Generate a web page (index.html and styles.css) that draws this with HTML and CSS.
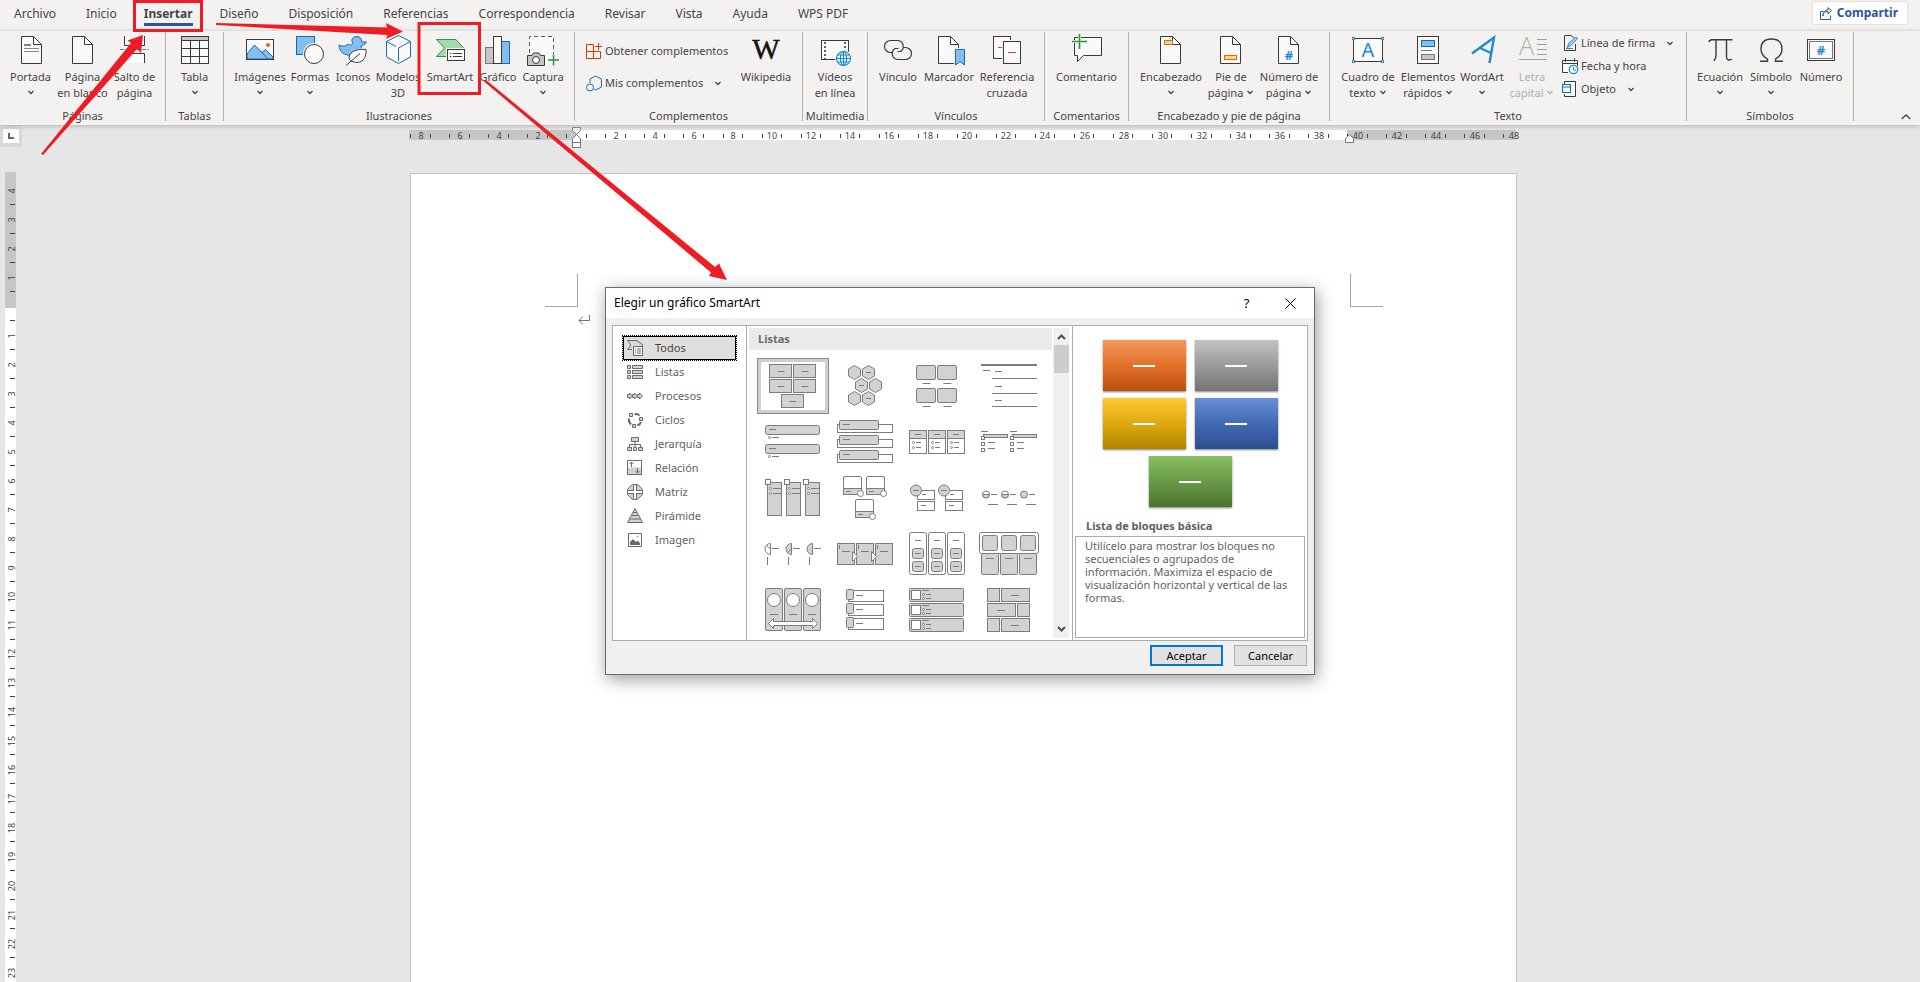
FILE: index.html
```html
<!DOCTYPE html>
<html lang="es">
<head>
<meta charset="utf-8">
<title>Documento - Word</title>
<link rel="stylesheet" href="styles.css">
</head>
<body>
<svg class="defs" aria-hidden="true">
  <symbol id="page" viewBox="0 0 32 32"><path d="M5.5 2.5H17.5L25.5 10.5V29.5H5.5z" fill="#fafafa" stroke="#3b3a39"/><path d="M17.5 2.5V10.5H25.5" fill="none" stroke="#3b3a39"/></symbol>
  <symbol id="chev" viewBox="0 0 8 5"><path d="M1.5 1L4 3.5L6.5 1" fill="none" stroke="currentColor" stroke-width="1.3"/></symbol>
</svg>
<div class="app">
<header class="top">
  <nav class="tabs">
    <button>Archivo</button><button>Inicio</button><button class="active"><span>Insertar</span></button><button>Diseño</button><button>Disposición</button><button>Referencias</button><button>Correspondencia</button><button>Revisar</button><button>Vista</button><button>Ayuda</button><button>WPS PDF</button>
  </nav>
  <button class="share"><svg width="12" height="13" viewBox="0 0 12 13" fill="none" stroke="#2b579a"><path d="M3.5 4.5H.5V12.500H10.500V8.500"/><path d="M3 9C3 5.500 5 4.500 8 4.500V7L11.500 3.500L8 .7V3C5 3 3 5 3 9z"/></svg>Compartir</button>
</header>
<div class="ribbon">
  <section class="group g-pages"><div class="items">
    <button class="big w52"><svg class="ic" viewBox="0 0 32 32"><path d="M6.500 2.500H18.500L26.500 10.500V29.500H6.500z" fill="#fafafa" stroke="#3b3a39"/><path d="M18.500 2.500V10.500H26.500" fill="none" stroke="#3b3a39"/><path d="M9 11H16" stroke="#666" stroke-width="1.600"/><path d="M9 14.500H24M9 17.500H24" stroke="#888"/></svg><span>Portada</span><svg class="cv"><use href="#chev"/></svg></button>
    <button class="big w52"><svg class="ic"><use href="#page"/></svg><span>Página<br>en blanco</span></button>
    <button class="big w52"><svg class="ic" viewBox="0 0 32 32" fill="#fafafa" stroke="#3b3a39"><path d="M5.500 2V11.500H25.500V2M5.500 29V19.500H25.500V29"/><path d="M1 15.500H30" stroke="#2b8fd6" stroke-dasharray="4 1.500"/></svg><span>Salto de<br>página</span></button>
  </div><h2>Páginas</h2></section>
  <section class="group g-tables"><div class="items">
    <button class="big w52"><svg class="ic" viewBox="0 0 32 32" fill="none" stroke="#3b3a39"><rect x="2.500" y="2.500" width="27" height="27" fill="#fafafa"/><rect x="2.500" y="2.500" width="27" height="4" fill="#c8c6c4"/><path d="M11.500 6.500V29.500M20.500 6.500V29.500M2.500 14.500H29.500M2.500 22.500H29.500"/></svg><span>Tabla</span><svg class="cv"><use href="#chev"/></svg></button>
  </div><h2>Tablas</h2></section>
  <section class="group g-illus"><div class="items">
    <button class="big w52"><svg class="ic" viewBox="0 0 32 32"><rect x="2.500" y="5.500" width="27" height="20" fill="#fafafa"/><path d="M3 20L10.500 11L18 18.500L21.500 15.500L29 23V25H3z" fill="#83beec" stroke="#0f6cbd"/><path d="M17 17.500L24 25" stroke="#0f6cbd"/><circle cx="24" cy="11" r="2" fill="#e06c00"/><rect x="2.500" y="5.500" width="27" height="20" fill="none" stroke="#3b3a39"/></svg><span>Imágenes</span><svg class="cv"><use href="#chev"/></svg></button>
    <button class="big w48"><svg class="ic" viewBox="0 0 32 32"><rect x="2.500" y="2.500" width="18" height="18" fill="#83beec" stroke="#0f6cbd"/><circle cx="20" cy="20" r="11" fill="#f3f2f1"/><circle cx="20" cy="20" r="9.500" fill="#fafafa" stroke="#3b3a39"/></svg><span>Formas</span><svg class="cv"><use href="#chev"/></svg></button>
    <button class="big w38"><svg class="ic" viewBox="0 0 32 32"><path d="M2 11C6 13 9 12 11 10C14 12 15 11 15.500 9C13.500 4 17 2.500 20 2.500C23 2.500 24.500 4.500 25 8H29.500C28 11 26 11 24 12C26 18 20 21.500 14 21.500C7 21 2 18 2 11z" fill="#83beec" stroke="#0f6cbd"/><path d="M10 32C9 22 16 13 31 14C31 25 27 32 16 29.500z" fill="#f3f2f1"/><path d="M13 26.500C9.500 20 17 14.500 29 15.500C30 26 23 31.500 13 26.500zM9 31.500L23 19.500" fill="#fafafa" stroke="#3b3a39"/></svg><span>Iconos</span></button>
    <button class="big w52"><svg class="ic" viewBox="0 0 32 32" fill="#fafafa" stroke="#0f6cbd"><path d="M16.500 1.500L28.500 7.500V23L16.500 29.500L4.500 23V7.500z"/><path d="M4.500 7.500L14 12.500M28.500 7.500L16.500 14V27" fill="none"/></svg><span>Modelos<br>3D</span></button>
    <button class="big w52"><svg class="ic" viewBox="0 0 32 32"><path d="M2.500 5.500H22L29.500 14L22 22.500H2.500L10.500 14z" fill="#a2dcae" stroke="#309048"/><rect x="12" y="14" width="20" height="14" fill="#f3f2f1"/><rect x="13.500" y="15.500" width="17" height="11" fill="#fafafa" stroke="#3b3a39"/><path d="M16 19.500H17.500M19 19.500H28M16 22.500H17.500M19 22.500H28" stroke="#3b3a39"/></svg><span>SmartArt</span></button>
    <button class="big w44"><svg class="ic" viewBox="0 0 32 32"><rect x="3.500" y="13.500" width="8" height="16" fill="#c8c6c4" stroke="#797775"/><rect x="19.500" y="7.500" width="8" height="22" fill="#83beec" stroke="#0f6cbd"/><rect x="11.500" y="2.500" width="8" height="27" fill="#fafafa" stroke="#3b3a39"/></svg><span>Gráfico</span></button>
    <button class="big w46"><svg class="ic" viewBox="0 0 32 32" fill="none"><rect x="2.500" y="2.500" width="24" height="26" fill="#fafafa"/><path d="M2.500 19V2.500H26.500V20" stroke="#605e5c" stroke-dasharray="4 3"/><path d="M.5 21.500H5L6.500 19H12L13.500 21.500H17.500V31.500H.5z" fill="#c8c6c4" stroke="#3b3a39"/><circle cx="9" cy="26" r="3.500" fill="#fafafa" stroke="#3b3a39"/><path d="M21 26H32M26.500 20.500V31.500" stroke="#309048" stroke-width="1.500"/></svg><span>Captura</span><svg class="cv"><use href="#chev"/></svg></button>
  </div><h2>Ilustraciones</h2></section>
  <section class="group g-addins"><div class="items">
    <div class="stack two">
      <button class="small"><svg width="17" height="17" viewBox="0 0 17 17" fill="none" stroke="#d83b01"><path d="M.5 8.500V1.500H7.500V16M.5 8.500V15.500H14.500V8.500H.5M12.500 0V7M9 3.500H16"/></svg><span>Obtener complementos</span></button>
      <button class="small"><svg width="17" height="17" viewBox="0 0 17 17" fill="none" stroke="#0f6cbd"><path d="M4 8V4L9.500 1L15.500 4V12L9.500 15L8 14"/><circle cx="4" cy="12.500" r="3.500"/></svg><span>Mis complementos</span><svg class="cv gap"><use href="#chev"/></svg></button>
    </div>
    <button class="big w64"><svg class="ic" viewBox="0 0 32 32"><text x="16" y="25" class="wiki">W</text></svg><span>Wikipedia</span></button>
  </div><h2>Complementos</h2></section>
  <section class="group g-media"><div class="items">
    <button class="big w52"><svg class="ic" viewBox="0 0 32 32" fill="none"><rect x="2.500" y="6.500" width="27" height="19" fill="#fafafa" stroke="#3b3a39"/><path d="M6 8V25M26 8V25" stroke="#3b3a39" stroke-width="1.600" stroke-dasharray="2 2"/><circle cx="24.500" cy="24.500" r="8.500" fill="#f3f2f1"/><g stroke="#1e8bcd" stroke-width="1.200"><circle cx="24.500" cy="24.500" r="7" fill="#fafafa"/><ellipse cx="24.500" cy="24.500" rx="3" ry="7"/><path d="M17.500 24.500H31.500M18.500 21H30.500M18.500 28H30.500M24.500 17.500V31.500"/></g></svg><span>Vídeos<br>en línea</span></button>
  </div><h2>Multimedia</h2></section>
  <section class="group g-links"><div class="items">
    <button class="big w50"><svg class="ic" viewBox="0 0 32 32" fill="none" stroke="#3b3a39" stroke-width="1.200"><path d="M11 18.500H8.500A6 6 0 0 1 8.500 6.500H16A6 6 0 0 1 18.500 17.500H15.500"/><path d="M21.500 13.500H23.500A6 6 0 0 1 23.500 25.500H15.500A6 6 0 0 1 13 14.500H16.500"/></svg><span>Vínculo</span></button>
    <button class="big w52"><svg class="ic" viewBox="0 0 32 32"><use href="#page" width="32" height="32"/><path d="M21 14H32V32H21z" fill="#f3f2f1"/><path d="M22.500 15.500H31.500V31L27 27.500L22.500 31z" fill="#83beec" stroke="#0f6cbd"/></svg><span>Marcador</span></button>
    <button class="big w64"><svg class="ic" viewBox="0 0 32 32" fill="#fafafa" stroke="#3b3a39"><rect x="2.500" y="2.500" width="17" height="22"/><path d="M11 6H31V31H11z" fill="#f3f2f1" stroke="none"/><rect x="12.500" y="7.500" width="17" height="22"/><path d="M7 13.500H11M17 18.500H25" stroke="#e8363b"/></svg><span>Referencia<br>cruzada</span></button>
  </div><h2>Vínculos</h2></section>
  <section class="group g-comments"><div class="items">
    <button class="big w64"><svg class="ic" viewBox="0 0 32 32"><path d="M3.500 3.500H30.500V21.500H12.500L6.500 27.500V21.500H3.500z" fill="#fafafa" stroke="#3b3a39"/><path d="M1 7.500H16M8.500 0V15" stroke="#b8e3c2" stroke-width="3"/><path d="M1 7.500H16M8.500 0V15" stroke="#309048" stroke-width="1.200"/></svg><span>Comentario</span></button>
  </div><h2>Comentarios</h2></section>
  <section class="group g-header"><div class="items">
    <button class="big w68"><svg class="ic" viewBox="0 0 32 32"><use href="#page" width="32" height="32"/><path d="M17.500 6.500H9.500V10.500H17.500" fill="#fcd58c" stroke="#e06c00"/></svg><span>Encabezado</span><svg class="cv"><use href="#chev"/></svg></button>
    <button class="big w52"><svg class="ic" viewBox="0 0 32 32"><use href="#page" width="32" height="32"/><rect x="9.500" y="21.500" width="12" height="4" fill="#fcd58c" stroke="#e06c00"/></svg><span>Pie de<br>página <svg class="cv"><use href="#chev"/></svg></span></button>
    <button class="big w64"><svg class="ic" viewBox="0 0 32 32"><use href="#page" width="32" height="32"/><text x="16" y="26" class="hash">#</text></svg><span>Número de<br>página <svg class="cv"><use href="#chev"/></svg></span></button>
  </div><h2>Encabezado y pie de página</h2></section>
  <section class="group g-text"><div class="items">
    <button class="big w62"><svg class="ic" viewBox="0 0 32 32"><rect x="1.500" y="4.500" width="29" height="23" fill="#fafafa" stroke="#3b3a39"/><g fill="#fff" stroke="#1e8bcd"><rect x=".5" y="3.500" width="2" height="2"/><rect x="29.500" y="3.500" width="2" height="2"/><rect x=".5" y="26.500" width="2" height="2"/><rect x="29.500" y="26.500" width="2" height="2"/></g><text x="16" y="23" class="boxa">A</text></svg><span>Cuadro de<br>texto <svg class="cv"><use href="#chev"/></svg></span></button>
    <button class="big w58"><svg class="ic" viewBox="0 0 32 32"><rect x="5.500" y="2.500" width="21" height="27" fill="#fafafa" stroke="#3b3a39"/><rect x="9.500" y="6.500" width="13" height="6" fill="#83beec" stroke="#0f6cbd"/><path d="M9 16.500H20" stroke="#797775"/><rect x="9.500" y="20.500" width="13" height="5" fill="#c8c6c4" stroke="#797775"/></svg><span>Elementos<br>rápidos <svg class="cv"><use href="#chev"/></svg></span></button>
    <button class="big w50"><svg class="ic" viewBox="0 0 32 32" fill="none" stroke="#1e8bcd" stroke-width="2.400"><path d="M6 19.500L28 3.500L23.500 29M14 14L25 19"/></svg><span>WordArt</span><svg class="cv"><use href="#chev"/></svg></button>
    <button class="big w50" disabled><svg class="ic" viewBox="0 0 32 32" fill="none" stroke="#a19f9d"><text x="10.500" y="21" class="dropa">A</text><path d="M21 5.500H31M21 10.500H31M21 15.500H31M21 20.500H31M3 25.500H31"/></svg><span>Letra<br>capital <svg class="cv"><use href="#chev"/></svg></span></button>
    <div class="stack">
      <button class="small"><svg width="17" height="17" viewBox="0 0 17 17" fill="none"><path d="M2.500 1V15.500H13.500V9M2.500 .5H9L12 3" fill="#fafafa" stroke="#3b3a39"/><path d="M5 12.500L7 8L14 2L15.500 3.500L9 10.500zM4 13.500H11" fill="#a8d3f2" stroke="#1e8bcd"/></svg><span>Línea de firma</span><svg class="cv gap"><use href="#chev"/></svg></button>
      <button class="small"><svg width="17" height="17" viewBox="0 0 17 17" fill="#fafafa" stroke="#3b3a39"><path d="M6 14.500H.5V2.500H15.500V8M.5 5.500H15.500M3.500 0V4M12.500 0V4"/><circle cx="11.500" cy="11.500" r="4.200" stroke="#1e8bcd" stroke-width="1.300"/><path d="M11.500 9V12H14" fill="none" stroke="#1e8bcd"/></svg><span>Fecha y hora</span></button>
      <button class="small"><svg width="17" height="17" viewBox="0 0 17 17" fill="#fafafa" stroke="#3b3a39"><path d="M2.500 3V.5H13.500V15.500H2.500V13"/><rect x=".5" y="3.500" width="8" height="8" stroke="#0f6cbd"/><path d="M.5 6H8.500" stroke="#0f6cbd"/></svg><span>Objeto</span><svg class="cv gap"><use href="#chev"/></svg></button>
    </div>
  </div><h2>Texto</h2></section>
  <section class="group g-symbols"><div class="items">
    <button class="big w50"><svg class="ic" viewBox="0 0 32 32" fill="none" stroke="#3b3a39" stroke-width="1.400"><path d="M5 8C5.500 5.700 6.500 5.700 8 5.700H28.500M12 5.700V20C12 24 11.500 26 9.500 26.500M22.500 5.700V23C22.500 26 25 27 28 25"/></svg><span>Ecuación</span><svg class="cv"><use href="#chev"/></svg></button>
    <button class="big w52"><svg class="ic" viewBox="0 0 32 32" fill="none" stroke="#3b3a39" stroke-width="1.400"><path d="M5 27.300H12.500V25C8 22.500 6 19 6 15C6 8.500 10 5 16.500 5S27 8.500 27 15C27 19 25 22.500 20.500 25V27.300H28"/></svg><span>Símbolo</span><svg class="cv"><use href="#chev"/></svg></button>
    <button class="big w48"><svg class="ic" viewBox="0 0 32 32" fill="#fafafa" stroke="#3b3a39"><rect x="2.500" y="5.500" width="27" height="21"/><rect x="4.500" y="7.500" width="23" height="17" stroke="#797775"/><text x="16" y="21" class="hash">#</text></svg><span>Número</span></button>
  </div><h2>Símbolos</h2></section>
  <button class="collapse" aria-label="Contraer la cinta"><svg width="10" height="6" viewBox="0 0 10 6" fill="none" stroke="#444" stroke-width="1.300"><path d="M.7 5L5 1L9.300 5"/></svg></button>
</div>

<main class="workspace">
  <div class="corner"><button aria-label="Tabulación"><svg width="6" height="6" viewBox="0 0 6 6"><path d="M1 0V5H6" fill="none" stroke="#666" stroke-width="2"/></svg></button></div>
  <div class="hrow"><svg class="hruler" id="hruler"></svg></div>
  <svg class="vruler" id="vruler"></svg>
  <div class="canvas">
    <article class="sheet">
      <div class="marks"><i class="mark left"></i><i class="mark right"></i></div>
      <svg class="pilcrow" width="12" height="10" viewBox="0 0 12 10" fill="none" stroke="#777"><path d="M11.500 0V5.500H1M5 1.500L1 5.500L5 9.500"/></svg>
    </article>
  </div>
</main>
</div>

<section class="dialog" role="dialog" aria-labelledby="dlg-title">
  <header class="dlg-head"><h1 id="dlg-title">Elegir un gráfico SmartArt</h1>
    <button aria-label="Ayuda">?</button>
    <button aria-label="Cerrar"><svg width="11" height="11" viewBox="0 0 11 11" stroke="#000"><path d="M.5 .5L10.500 10.500M10.500 .5L.5 10.500"/></svg></button>
  </header>
  <div class="dlg-body">
    <nav class="cats">
      <button class="sel"><svg class="ci" viewBox="0 0 17 16"><path d="M.5 .5H10L15.500 4.500V7M.5 .5L4 5L.5 9.500H5" /><rect x="6.500" y="6.500" width="9" height="9" fill="#fff"/><path d="M8 9H9M10 9H14M8 11H9M10 11H14M8 13H9M10 13H14"/></svg>Todos</button>
      <button><svg class="ci" viewBox="0 0 17 16"><path d="M.5 1.500H3.500V4.500H.5zM5.500 1.500H15.500V4.500H5.500zM.5 6.500H3.500V9.500H.5zM5.500 6.500H15.500V9.500H5.500zM.5 11.500H3.500V14.500H.5zM5.500 11.500H15.500V14.500H5.500z"/></svg>Listas</button>
      <button><svg class="ci" viewBox="0 0 17 16"><path d="M.5 6.500H2.500V5L5.500 8L2.500 11V9.500H.5zM5.500 6.500H7.500V5L10.500 8L7.500 11V9.500H5.500zM10.500 6.500H12.500V5L15.500 8L12.500 11V9.500H10.500z"/></svg>Procesos</button>
      <button><svg class="ci" viewBox="0 0 17 16"><path d="M2.500 1.500H5.500V4.500H2.500zM12.500 5.500H15.500V8.500H12.500zM5.500 12.500H8.500V15.500H5.500z"/><path d="M7.500 2.500C10 1.500 11 2 12.500 3.500M14 10C13.500 12 12.500 12.500 10.500 13.500M2 6.500C1.500 9 2 10.500 4 12.500" fill="none" stroke-width="2"/></svg>Ciclos</button>
      <button><svg class="ci" viewBox="0 0 17 16"><path d="M4.500 1.500H11.500V5.500H4.500zM.5 11.500H4.500V14.500H.5zM6.500 11.500H9.500V14.500H6.500zM11.500 11.500H15.500V14.500H11.500z"/><path d="M8 5.500V11.500M2.500 11V8.500H13.500V11" fill="none"/></svg>Jerarquía</button>
      <button><svg class="ci" viewBox="0 0 17 16"><path d="M.5 .5H14.500V14.500H.5z" fill="#fff"/><path d="M.5 7.500H14.500V14.500H.5z" fill="#d2d2d2" stroke="none"/><path d="M.5 .5H14.500V14.500H.5zM4.500 7V2M2.500 4L4.500 2L6.500 4M10.500 8V13M8.500 11L10.500 13L12.500 11" fill="none"/></svg>Relación</button>
      <button><svg class="ci" viewBox="0 0 17 16"><path d="M5.500 .5H10.500L13 2.500L15.500 5.500V10.500L13 13L10.500 15.500H5.500L3 13L.5 10.500V5.500L3 2.500z"/><path d="M8 1V15M1 8H15" stroke="#6a6a6a" stroke-width="4"/><path d="M8 1V15M1 8H15" stroke="#fff" stroke-width="2"/></svg>Matriz</button>
      <button><svg class="ci" viewBox="0 0 17 16"><path d="M8 .5L15.500 14.500H.5zM6 4.500H10M4.500 7.500H11.500M2.500 11H13.500"/></svg>Pirámide</button>
      <button><svg class="ci" viewBox="0 0 17 16"><path d="M1.500 1.500H14.500V14.500H1.500z" fill="#fff"/><path d="M3 13V10L6 7L9 10L10.500 8.500L13 11V13z" fill="#6a6a6a" stroke="none"/><circle cx="10.500" cy="4.500" r="1.300" fill="#ccc" stroke="none"/></svg>Imagen</button>
    </nav>
    <div class="gallery">
      <div class="gal-main"><h2>Listas</h2><div class="thumbs" id="thumbs"></div></div>
      <div class="scroll"><svg width="9" height="6" viewBox="0 0 9 6"><path d="M1 5L4.500 1.500L8 5"/></svg><i class="thumb"></i><svg width="9" height="6" viewBox="0 0 9 6"><path d="M1 1L4.500 4.500L8 1"/></svg></div>
    </div>
    <aside class="preview">
      <div class="blocks"><i class="b orange"></i><i class="b gray"></i><i class="b gold"></i><i class="b blue"></i><i class="b green"></i></div>
      <h3>Lista de bloques básica</h3>
      <p>Utilícelo para mostrar los bloques no secuenciales o agrupados de información. Maximiza el espacio de visualización horizontal y vertical de las formas.</p>
    </aside>
  </div>
  <footer class="dlg-foot"><button class="ok">Aceptar</button><button>Cancelar</button></footer>
</section>

<svg class="notes" aria-hidden="true">
  <g fill="none" stroke="#ee1c25" stroke-width="3"><rect x="134.500" y="1.500" width="67" height="29"/><rect x="419" y="23.500" width="60.500" height="70"/></g>
  <g fill="#ee1c25"><path d="M41 154L131 43L127.500 40.500L143 35L141 53L137 49L43 155z"/><path d="M216 23L387 27.500L386 23L403 31.500L386 39L387.500 35L216 25z"/><path d="M486 80L715 267L719 263.500L727 280L709 276L711 272.500L484 81.500z"/></g>
</svg>
<script src="app.js"></script>
</body>
</html>
```
FILE: app.js
```js
// Rulers
const UNIT = 19.52;
function label(x, y, n, extra) {
  return `<text x="${x}" y="${y}" ${extra || ''}>${n}</text>`;
}
function horizontalRuler() {
  const zero = 167;
  let s = '<rect x="-1" y="5" width="1107" height="10" fill="#c6c6c6"/><rect x="167" y="5" width="770" height="10" fill="#fff"/>';
  for (let n = -9; n <= 48; n++) {
    if (n % 2 === 0 && n !== 0) s += label(Math.round(zero + n * UNIT), 14, Math.abs(n));
    if (n < 48) s += `<path d="M${Math.floor(zero + (n + 0.48) * UNIT)}.5 9V13"/>`;
  }
  s += '<g class="knob"><path d="M162.500 2.500H170.500V5.500L162.500 13.500V17.500H170.500V13.500L162.500 5.500z"/><rect x="162.500" y="17.500" width="8" height="5"/><path d="M935.500 17.500V13.500L939.500 9.500L943.500 13.500V17.500z"/></g>';
  document.getElementById('hruler').innerHTML = s;
}
function verticalRuler() {
  const zero = 160, u = 28.95;
  let s = '<rect x="5" y="161" width="11" height="3000" fill="#fff"/><rect x="5" y="25" width="11" height="136" fill="#c6c6c6"/>';
  for (let n = -4; n <= 23; n++) {
    const y = Math.round(zero + n * u);
    if (n) s += label(15, y, Math.abs(n), `transform="rotate(-90 15 ${y})"`);
    s += `<path d="M10 ${Math.floor(zero + (n + 0.47) * u)}.5H15"/>`;
  }
  document.getElementById('vruler').innerHTML = s;
}
horizontalRuler();
verticalRuler();

// SmartArt thumbnails, each on a 72 x 56 grid cell
const G = '#d2d2d2', W = '#fff';
const r = (x1, y1, x2, y2, f = G, rx = 0) => `<rect x="${x1}" y="${y1}" width="${x2 - x1}" height="${y2 - y1}" rx="${rx}" fill="${f}"/>`;
const l = (x1, x2, y) => `<path d="M${x1} ${y}H${x2}"/>`;
const c = (x, y, rad = 1, f = W) => `<circle cx="${x}" cy="${y}" r="${rad}" fill="${f}"/>`;
const p = (d, f = 'none') => `<path d="${d}" fill="${f}"/>`;
const rep = (xs, fn) => xs.map(fn).join('');
const hex = (x, y) => p(`M${x} ${y - 7}L${x + 6} ${y - 3.5}V${y + 3.5}L${x} ${y + 7}L${x - 6} ${y + 3.5}V${y - 3.5}z`, G);
const cols = [0, 19, 38];
const thumbs = [
  rep([[12.5, 6.5], [36.5, 6.5], [12.5, 21.5], [36.5, 21.5], [24.5, 36.5]], ([x, y]) => r(x, y, x + 22, y + 13) + l(x + 8, x + 15, y + 7)),
  rep([[25.5, 14.5], [39.5, 14.5], [32.5, 27.5], [46.5, 27.5], [25.5, 40.5], [39.5, 40.5]], ([x, y]) => hex(x, y)) + l(37, 42, 14.5) + l(30, 35, 27.5) + l(37, 42, 40.5),
  rep([[15.5, 7.5], [36.5, 7.5], [15.5, 30.5], [36.5, 30.5]], ([x, y]) => r(x, y, x + 19, y + 14, G, 1.5) + l(x + 6, x + 14, y + 18)),
  '<path d="M8 7H64" stroke-width="2"/>' + l(10, 17, 12.5) + l(22, 29, 13.5) + l(19, 64, 20.5) + l(22, 29, 28.5) + l(19, 64, 35.5) + l(22, 29, 42.5) + l(19, 64, 48.5),
  rep([0, 19], y => r(8.5, 11.5 + y, 62.5, 20.5 + y, G, 2) + l(12, 19, 15.5 + y) + c(12.5, 23.5 + y) + l(15, 22, 23.5 + y)),
  rep([0, 15, 30], y => r(8.5, 10.5 + y, 63.5, 18.5 + y, W) + r(10.5, 6.5 + y, 49.5, 15.5 + y, G, 1) + l(14, 21, 10.5 + y)),
  rep(cols, x => r(8.5 + x, 16.5, 25.5 + x, 39.5, W) + r(8.5 + x, 16.5, 25.5 + x, 24.5) + l(14 + x, 20 + x, 20.5) + c(12.5 + x, 28.5) + l(15 + x, 20 + x, 28.5) + c(12.5 + x, 33.5) + l(15 + x, 20 + x, 33.5)),
  rep([0, 29], x => l(8 + x, 15 + x, 17.5) + r(10.5 + x, 20.5, 34.5 + x, 23.5) + rep([22.5, 28.5, 34.5], y => r(8.5 + x, y, 11.5 + x, y + 3, W)) + l(15 + x, 22 + x, 28.5) + l(15 + x, 22 + x, 34.5)),
  rep(cols, x => r(10.5 + x, 12.5, 24.5 + x, 45.5) + r(8.5 + x, 9.5, 13.5 + x, 14.5, W) + c(13.5 + x, 18.5) + l(16 + x, 24 + x, 18.5) + c(13.5 + x, 23.5) + l(16 + x, 24 + x, 23.5)),
  rep([[0, 0], [23, 0], [12, 23]], ([x, y]) => r(14.5 + x, 6.5 + y, 32.5 + x, 24.5 + y, W, 1.5) + r(14.5 + x, 18.5 + y, 32.5 + x, 24.5 + y) + l(17 + x, 22 + x, 21.5 + y) + c(31.5 + x, 23.5 + y, 3)),
  rep([0, 28], x => r(16.5 + x, 20.5, 33.5 + x, 29.5, W) + r(16.5 + x, 31.5, 33.5 + x, 40.5, W) + c(15 + x, 20.5, 5.5, G) + l(12 + x, 18 + x, 20.5) + l(21 + x, 25 + x, 24.5) + l(20 + x, 25 + x, 35.5)),
  rep([0, 19, 38], x => c(13 + x, 24.5, 3.5, x === 38 ? G : W) + (x < 38 ? p(`M${9.5 + x} 24.500A3.500 3.500 0 0 0 ${16.5 + x} 24.500z`, G) : '') + l(18 + x, 24 + x, 24.5) + l(15 + x, 25 + x, 34.5)),
  rep([0, 21, 42], x => p(`M${13.5 + x} 17.500A5.500 5.500 0 0 0 ${13.5 + x} 28.500z`, x ? G : W) + (x < 42 ? p(`M${13.5 + x} 23L${9 + x} ${x ? 27 : 19}`) : '') + l(15 + x, 22 + x, 22.5) + p(`M${10.5 + x} 31V39`)),
  rep(cols, x => r(8.5 + x, 17.5, 25.5 + x, 38.5) + l(13 + x, 21 + x, 25.5) + p(`M${10.5 + x} 19V23`)) + rep([0, 19], x => p(`M${23.5 + x} 25.500L${28.5 + x} 30.500L${23.5 + x} 35.500z`, W)),
  rep(cols, x => r(8.5 + x, 6.5, 25.5 + x, 48.5, W, 2) + l(14 + x, 20 + x, 14.5) + rep([22.5, 35.5], y => r(11.5 + x, y, 22.5 + x, y + 10, G, 2) + l(14 + x, 20 + x, y + 5))),
  r(6.5, 6.5, 65.5, 27.5, W, 2) + rep(cols, x => r(9.5 + x, 9.5, 24.5 + x, 24.5, G, 2) + r(8.5 + x, 27.5, 25.5 + x, 48.5, G, 1) + l(13 + x, 21 + x, 32.5)),
  rep(cols, x => r(8.5 + x, 6.5, 25.5 + x, 48.5, G, 1.5) + c(17 + x, 18, 6.5) + l(13 + x, 21 + x, 32.5)) + p('M11.500 41.500L16.500 36.500V39.500H55.500V36.500L60.500 41.500L55.500 46.500V43.500H16.500V46.500z', W),
  rep([0, 14, 28], y => r(19.5, 8.5 + y, 54.5, 19.5 + y, W) + r(17.5, 7.5 + y, 24.5, 17.5 + y, G, 1) + l(27, 34, 13.5 + y)),
  rep([0, 15, 30], y => r(8.5, 6.5 + y, 62.5, 19.5 + y, G, 1) + r(10.5, 8.5 + y, 19.5, 17.5 + y, W) + l(21, 28, 8.5 + y) + c(22.5, 12.5 + y) + l(25, 30, 12.5 + y) + c(22.5, 16.5 + y) + l(25, 30, 16.5 + y)),
  r(14.5, 6.5, 26.5, 19.5) + r(28.5, 6.5, 56.5, 19.5) + l(38, 46, 13.5) + r(14.5, 21.5, 42.5, 34.5) + r(44.5, 21.5, 56.5, 34.5) + l(24, 32, 28.5) + r(14.5, 36.5, 26.5, 49.5) + r(28.5, 36.5, 56.5, 49.5) + l(38, 46, 43.5)
];
document.getElementById('thumbs').innerHTML = thumbs.map((t, i) =>
  `<button class="${i ? '' : 'picked'}" aria-label="Lista ${i + 1}"><svg width="72" height="56" viewBox="0 0 72 56">${t}</svg></button>`).join('');
```
FILE: styles.css
```css
* { box-sizing: border-box; }
body { margin: 0; font: 11px/16px "Noto Sans", "Open Sans", sans-serif; color: #444; background: #e6e6e6; }
button { font: inherit; color: inherit; background: none; border: 0; padding: 0; margin: 0; }
h1, h2, h3, p { margin: 0; font-weight: normal; font-size: 11px; }
.defs { display: none; }
.app { height: 100vh; display: flex; flex-direction: column; overflow: hidden; }

.top { display: flex; justify-content: space-between; align-items: flex-start; height: 31px; background: #f3f2f1; padding-right: 13px; }
.tabs { display: flex; font-size: 12px; }
.tabs button { padding: 5px 15px 0; height: 27px; line-height: 18px; display: flex; align-items: flex-start; white-space: nowrap; }
.tabs button:first-child { padding-left: 14px; }
.tabs .active { font-weight: bold; padding: 5px 12px 0; }
.tabs .active span { border-bottom: 3px solid #2b579a; height: 21px; }
.share { display: flex; align-items: center; gap: 5px; margin-top: 2px; height: 22px; padding: 0 9px 0 7px; background: #fff; box-shadow: 0 0 2px #bbb; border-radius: 2px; color: #2b579a; font-size: 12px; font-weight: bold; }

.ribbon { display: flex; position: relative; flex: none; height: 94px; background: #f3f2f1; box-shadow: 0 1px 5px #b0b0b0; z-index: 1; }
.group { display: flex; flex-direction: column; justify-content: space-between; flex: none; height: 89px; border-right: 1px solid #b3b0ad; margin-top: 1px; background: #f3f2f1; }
.group h2 { text-align: center; line-height: 14px; height: 11px; white-space: nowrap; display: flex; align-items: center; justify-content: center; }
.items { display: flex; justify-content: center; height: 72px; }
.g-pages { width: 166px; } .g-tables { width: 58px; } .g-illus { width: 351px; }
.g-addins { width: 228px; } .g-media { width: 65px; } .g-links { width: 177px; }
.g-comments { width: 84px; } .g-header { width: 201px; } .g-text { width: 357px; } .g-symbols { width: 167px; }
.g-illus .items { justify-content: flex-start; padding-left: 10px; }
.g-text .items { justify-content: flex-start; padding-left: 7px; }
.g-addins .items { justify-content: flex-start; padding-left: 11px; }
.big { display: flex; flex-direction: column; align-items: center; white-space: nowrap; padding-top: 2px; }
.big > span { margin-top: 3px; }
.big:disabled { color: #b1afad; }
.ic { width: 32px; height: 32px; flex: none; overflow: visible; }
.cv { width: 8px; height: 5px; flex: none; }
.big > .cv { margin-top: 5px; }
.big span .cv { vertical-align: 2px; }
.w38 { width: 38px; } .w44 { width: 44px; } .w46 { width: 46px; } .w48 { width: 48px; } .w50 { width: 50px; } .w52 { width: 52px; }
.w58 { width: 58px; } .w62 { width: 62px; } .w64 { width: 64px; } .w68 { width: 68px; }
.stack { display: flex; flex-direction: column; gap: 7px; padding: 3px 0 0 5px; }
.stack.two { gap: 16px; padding: 11px 0 0; width: 148px; }
.small { display: flex; align-items: center; gap: 2px; height: 16px; white-space: nowrap; }
.small .gap { margin-left: 9px; }
text { stroke: none; text-anchor: middle; }
.wiki { font: 29px "Liberation Serif", serif; fill: #111; stroke: #111; stroke-width: .5px; }
.hash { font: bold 13px "Noto Sans", sans-serif; fill: #1e8bcd; }
.boxa { font: 20px "Noto Sans", sans-serif; fill: #1e8bcd; }
.dropa { font: 300 25px "Open Sans", sans-serif; fill: #b1afad; }
.collapse { position: absolute; right: 8px; bottom: 2px; width: 12px; height: 12px; display: flex; align-items: center; justify-content: center; }

.workspace { flex: 1; min-height: 0; display: grid; grid-template: 22px 1fr / 22px 1fr; }
.corner { background: #d9d9d9; padding: 4px 3px; display: flex; }
.corner button { flex: 1; background: #fff; display: flex; align-items: center; justify-content: center; }
.hrow, .canvas { display: flex; justify-content: center; padding-right: 15px; min-height: 0; }
.hruler { width: 1107px; height: 24px; overflow: visible; flex: none; }
.vruler { width: 22px; height: 100%; overflow: hidden; }
.hruler text, .vruler text { font: 9px "Noto Sans", sans-serif; fill: #444; }
.hruler path, .vruler path { stroke: #444; }
.hruler .knob path, .knob rect { fill: #fff; stroke: #777; }
.canvas { padding-top: 26px; overflow: hidden; }
.sheet { width: 1107px; background: #fff; border: 1px solid #c3c3c3; border-bottom: 0; padding-top: 100px; }
.marks { display: flex; justify-content: space-between; padding: 0 133px 0 134px; }
.mark { width: 33px; height: 33px; border-bottom: 1px solid #a6a6a6; }
.mark.left { border-right: 1px solid #a6a6a6; }
.mark.right { border-left: 1px solid #a6a6a6; }
.pilcrow { display: block; margin: 8px 0 0 167px; }

.dialog { position: absolute; z-index: 2; top: 287px; left: calc(50% - 355px); width: 710px; border: 1px solid #6b6b6b; background: #f0f0f0; box-shadow: 2px 4px 16px rgba(0,0,0,.4); }
.dlg-head { display: flex; align-items: center; height: 30px; background: #fff; color: #000; padding: 0 16px 0 8px; }
.dlg-head h1 { flex: 1; font-size: 12px; }
.dlg-head button { width: 45px; display: flex; justify-content: center; font-size: 13px; }
.dlg-head button:last-child { width: 15px; margin-left: 14px; }
.dlg-body { display: grid; grid-template-columns: 134px 326px 1fr; margin: 7px 6px 0; height: 316px; background: #fff; border: 1px solid #a5acb2; color: #5f5f5f; }
.cats { padding: 10px; border-right: 1px solid #a5acb2; }
.cats button { display: flex; align-items: center; gap: 11px; width: 113px; height: 24px; padding-left: 4px; }
.cats .sel { background: #e1dfdd; outline: 1px dotted #000; outline-offset: 0; border: 1px solid #000; padding-left: 3px; color: #444; }
.ci { width: 17px; height: 16px; fill: #d2d2d2; stroke: #6a6a6a; }
.gallery { display: flex; padding: 2px; border-right: 1px solid #a5acb2; }
.gal-main { flex: 1; }
.gal-main h2 { background: #eaeaea; height: 22px; line-height: 21px; padding-left: 9px; font-weight: bold; color: #6a6a6a; }
.thumbs { display: grid; grid-template-columns: repeat(4, 72px); padding: 8px 0 0 8px; }
.thumbs button { height: 56px; padding: 0; }
.thumbs svg { display: block; stroke: #7c7c7c; fill: none; }
.thumbs .picked { box-shadow: inset 0 0 0 1px #8a8a84, inset 0 0 0 4px #cfcfcb; }
.scroll { width: 16px; background: #f0f0f0; display: flex; flex-direction: column; align-items: center; padding: 6px 0; margin: 0 1px; }
.scroll svg { fill: none; stroke: #505050; stroke-width: 2; flex: none; }
.scroll .thumb { width: 15px; height: 28px; background: #cdcdcd; margin: 5px 0 auto; }
.preview { padding: 14px 2px 2px; display: flex; flex-direction: column; }
.blocks { display: flex; flex-wrap: wrap; justify-content: center; gap: 7px 9px; width: 184px; margin: 0 auto; }
.b { width: 83px; height: 51px; display: flex; align-items: center; justify-content: center; box-shadow: 0 1px 2px rgba(0,0,0,.5); }
.b::after { content: ""; width: 22px; height: 2px; background: #fff; }
.orange { background: linear-gradient(#f4975a, #e06d25 55%, #b9510f); }
.gray { background: linear-gradient(#c2c2c2, #979797 55%, #737373); }
.gold { background: linear-gradient(#ffcb2f, #daa60c 55%, #b08300); }
.blue { background: linear-gradient(#678fd6, #3f67b0 55%, #2d4e8c); }
.green { background: linear-gradient(#86bf60, #679646 55%, #4b742e); }
.preview h3 { margin: 11px 0 2px 11px; line-height: 16px; font-weight: bold; }
.preview p { flex: 1; border: 1px solid #ababab; padding: 2px 9px; line-height: 13px; }
.dlg-foot { display: flex; justify-content: flex-end; gap: 11px; padding: 4px 7px 8px; color: #000; }
.dlg-foot button { width: 73px; height: 21px; background: #e1e1e1; border: 1px solid #adadad; }
.dlg-foot .ok { border: 2px solid #0078d7; }

.notes { position: absolute; z-index: 3; top: 0; left: 0; width: 740px; height: 290px; pointer-events: none; }
```
